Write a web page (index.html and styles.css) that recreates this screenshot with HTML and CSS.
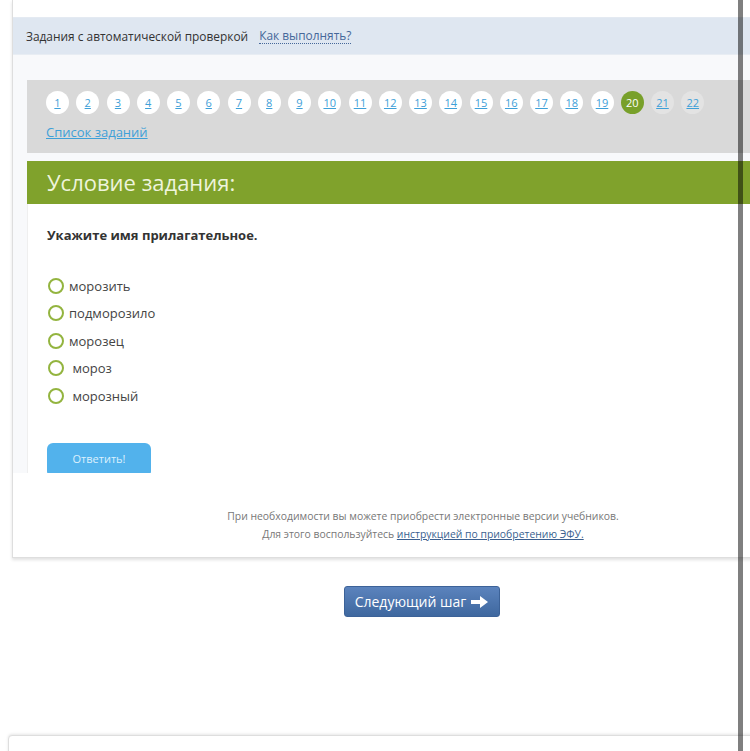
FILE: index.html
```html
<!DOCTYPE html>
<html lang="ru">

<head>
    <meta charset="UTF-8">
    <meta name="viewport" content="width=device-width, initial-scale=1.0">
    <title>Задания с автоматической проверкой</title>
    <link rel="stylesheet" href="styles.css">
</head>

<body>
    <div class="page">
        <div class="card">
            <div class="card-top"></div>
            <div class="strip">
                <span>Задания с автоматической проверкой</span>
                <a href="#" class="strip-link">Как выполнять?</a>
            </div>
            <div class="area">
                <div class="pager">
                    <div class="pager-list">
                        <a href="#" class="num">1</a>
                        <a href="#" class="num">2</a>
                        <a href="#" class="num">3</a>
                        <a href="#" class="num">4</a>
                        <a href="#" class="num">5</a>
                        <a href="#" class="num">6</a>
                        <a href="#" class="num">7</a>
                        <a href="#" class="num">8</a>
                        <a href="#" class="num">9</a>
                        <a href="#" class="num">10</a>
                        <a href="#" class="num">11</a>
                        <a href="#" class="num">12</a>
                        <a href="#" class="num">13</a>
                        <a href="#" class="num">14</a>
                        <a href="#" class="num">15</a>
                        <a href="#" class="num">16</a>
                        <a href="#" class="num">17</a>
                        <a href="#" class="num">18</a>
                        <a href="#" class="num">19</a>
                        <span class="num current">20</span>
                        <a href="#" class="num rest">21</a>
                        <a href="#" class="num rest">22</a>
                    </div>
                    <a href="#" class="task-list">Список заданий</a>
                </div>

                <div class="task">
                    <div class="task-title">Условие задания:</div>
                    <div class="task-body">
                        <p class="question">Укажите имя прилагательное.</p>
                        <ul class="answers">
                            <li><span class="radio"></span>морозить</li>
                            <li><span class="radio"></span>подморозило</li>
                            <li><span class="radio"></span>морозец</li>
                            <li><span class="radio"></span>&nbsp;мороз</li>
                            <li><span class="radio"></span>&nbsp;морозный</li>
                        </ul>
                        <button class="btn-answer">Ответить!</button>
                    </div>
                </div>
            </div>
            <div class="card-footer">
                <p>При необходимости вы можете приобрести электронные версии учебников.</p>
                <p>Для этого воспользуйтесь <a href="#">инструкцией по приобретению ЭФУ.</a></p>
            </div>
        </div>

        <div class="next">
            <button class="btn-next">Следующий шаг
                <svg class="arrow" width="18" height="12" viewBox="0 0 18 12">
                    <path d="M0 4h9V0l8 6-8 6V8H0z" fill="#fff" />
                </svg>
            </button>
        </div>

        <div class="card card-bottom"></div>
    </div>
    <div class="scroll-line"></div>
</body>

</html>
```

FILE: styles.css
```css
html,
body {
    margin: 0;
    padding: 0;
    overflow: hidden;
    background-color: #fff;
}

body {
    font-family: "Open Sans", "Noto Sans", sans-serif;
    color: #333;
}

.page {
    width: 840px;
}

.card {
    width: 820px;
    margin-left: 12px;
    background-color: #fff;
    border: 1px solid #dedede;
    border-top: none;
    box-shadow: 0 2px 3px rgba(0, 0, 0, 0.12);
}

.card-top {
    height: 17px;
}

.strip {
    height: 38px;
    box-sizing: border-box;
    display: flex;
    align-items: center;
    gap: 11px;
    padding-left: 13px;
    background-color: #dfe7f1;
    border-top: 1px solid #e4eaf2;
    border-bottom: 1px solid #e8edf3;
    font-size: 11.9px;
    color: #333;
}

.strip-link {
    color: #46689a;
    text-decoration: none;
    border-bottom: 1px dotted #46689a;
    line-height: 15px;
}

.area {
    background-color: #f8f9fb;
    padding: 25px 0 0 14px;
}

.pager {
    background-color: #d9d9d9;
    padding: 11px 19px 11px;
}

.pager-list {
    display: flex;
    gap: 7.25px;
}

.num {
    width: 23px;
    height: 23px;
    border-radius: 50%;
    background-color: #fff;
    color: #3ea0d8;
    font-size: 11px;
    line-height: 23px;
    text-align: center;
    text-decoration: underline;
}

.num.current {
    background-color: #78a02a;
    color: #fff;
    text-decoration: none;
}

.num.rest {
    background-color: #e3e3e3;
}

.task-list {
    display: inline-block;
    margin-top: 9px;
    font-size: 13px;
    line-height: 18px;
    color: #3ea0d8;
}

.task {
    margin-top: 8px;
}

.task-title {
    height: 43px;
    background-color: #80a22c;
    color: #eef4dc;
    font-size: 22px;
    line-height: 43px;
    padding-left: 20px;
}

.task-body {
    height: 269px;
    box-sizing: border-box;
    overflow: hidden;
    background-color: #fff;
    border-left: 1px solid #efefef;
    padding: 22px 0 0 19px;
}

.question {
    margin: 0;
    font-size: 13px;
    font-weight: bold;
    line-height: 18px;
    color: #333;
}

.answers {
    list-style: none;
    margin: 28px 0 0;
    padding: 0;
}

.answers li {
    display: flex;
    align-items: center;
    height: 27.5px;
    font-size: 13px;
    color: #444;
}

.radio {
    width: 12px;
    height: 12px;
    border: 2px solid #93b43f;
    border-radius: 50%;
    margin: 0 5px 0 1px;
}

.btn-answer {
    margin-top: 33px;
    width: 104px;
    height: 34px;
    border: none;
    border-radius: 6px;
    background-color: #52b2ec;
    color: #dcf0fd;
    font-family: "Open Sans", sans-serif;
    font-size: 11px;
    padding-bottom: 4px;
}

.card-footer {
    padding: 34px 0 14px;
    text-align: center;
    font-size: 10.4px;
    line-height: 18px;
    color: #777;
}

.card-footer p {
    margin: 0;
}

.card-footer a {
    color: #3b5f8f;
}

.next {
    width: 844px;
    margin-top: 28px;
    display: flex;
    justify-content: center;
}

.btn-next {
    width: 156px;
    height: 31px;
    display: flex;
    align-items: center;
    justify-content: center;
    gap: 5px;
    border: 1px solid #3c6298;
    border-radius: 3px;
    background: linear-gradient(#5b83bd, #3f689f);
    color: #fff;
    font-family: "Open Sans", sans-serif;
    font-size: 14px;
}

.arrow {
    display: block;
}

.card-bottom {
    margin-left: 8px;
    margin-top: 118px;
    height: 40px;
    border-top: 1px solid #dedede;
    border-radius: 4px 0 0 0;
    box-shadow: 0 -1px 3px rgba(0, 0, 0, 0.1);
}

.scroll-line {
    position: fixed;
    top: 0;
    left: 738px;
    width: 5px;
    height: 100%;
    background-color: rgba(0, 0, 0, 0.5);
}
```
